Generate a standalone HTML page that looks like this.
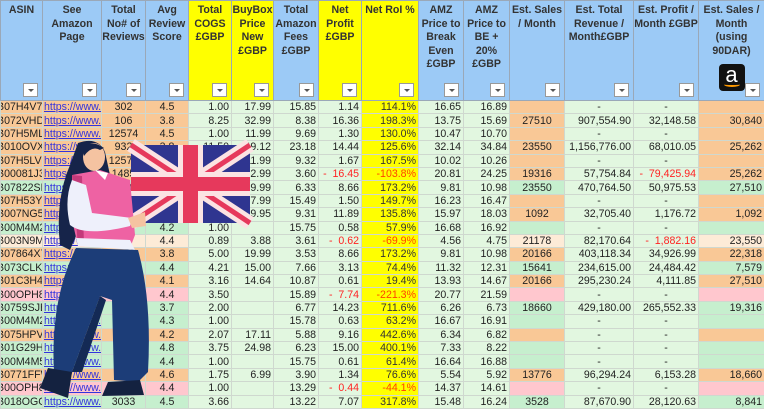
<!DOCTYPE html>
<html><head><meta charset="utf-8"><style>
body{margin:0;width:764px;height:400px;overflow:hidden;background:#fff;font-family:"Liberation Sans",sans-serif;position:relative}
table{border-collapse:collapse;table-layout:fixed;position:absolute;left:0;top:0;width:764px}
td{border:1px solid #cfd8cf;font-size:10.6px;color:#222;padding:0 2px;white-space:nowrap;overflow:hidden;height:12.4px;line-height:12px;text-align:right}
th{border:1px solid #9aa8b8;font-size:10.6px;font-weight:bold;color:#333;vertical-align:top;height:96px;padding:3px 0 0;line-height:13.5px;position:relative;background:#9ccaf6;overflow:hidden}
th.y{background:#ffff00}
th i{position:absolute;right:4px;bottom:3px;width:13px;height:12px;background:#fff;border:1px solid #999;font-style:normal}
th i:after{content:"";position:absolute;left:4px;top:5px;border:3px solid transparent;border-top:3px solid #555}
td.a{text-align:left;padding-left:0;text-indent:-4px}
td.l{text-align:left;color:#3333dd;text-decoration:underline;padding-left:1px}
td.c{text-align:center}
.o{background:#f9c896}.g{background:#c6efce}.p{background:#ffc7ce}.w{background:#fdebd7}
.lg{background:#e2f7e0}.yy{background:#ffff00;color:#333}
.r{color:#f22}
.rr{color:#f40}
</style></head><body>
<table>
<colgroup><col style="width:42px"><col style="width:59px"><col style="width:44px"><col style="width:43px"><col style="width:43px"><col style="width:42px"><col style="width:45px"><col style="width:43px"><col style="width:57px"><col style="width:45px"><col style="width:46px"><col style="width:55px"><col style="width:69px"><col style="width:65px"><col style="width:66px"></colgroup>
<tr><th>ASIN<i></i></th><th>See Amazon Page<i></i></th><th>Total No# of Reviews<i></i></th><th>Avg Review Score<i></i></th><th class="y">Total COGS £GBP<i></i></th><th class="y">BuyBox Price New £GBP<i></i></th><th>Total Amazon Fees £GBP<i></i></th><th class="y">Net Profit £GBP<i></i></th><th class="y">Net RoI %<i></i></th><th>AMZ Price to Break Even £GBP<i></i></th><th>AMZ Price to BE + 20% £GBP<i></i></th><th>Est. Sales / Month<i></i></th><th>Est. Total Revenue / Month£GBP<i></i></th><th>Est. Profit / Month £GBP<i></i></th><th>Est. Sales / Month (using 90DAR)<div style="margin:6px auto 0;width:26px;height:27px;background:#111;border-radius:4px;color:#fff;font-size:22px;line-height:22px;font-weight:normal">a<div style="width:16px;height:3px;border-bottom:2px solid #f90;border-radius:0 0 50% 50%;margin:-4px auto 0"></div></div><i></i></th></tr>
<tr class="o"><td class="a">B07H4V7M</td><td class="l">https://www.a</td><td class="c">302</td><td class="c">4.5</td><td class="lg">1.00</td><td class="lg">17.99</td><td class="lg">15.85</td><td class="lg">1.14</td><td class="yy">114.1%</td><td class="lg">16.65</td><td class="lg">16.89</td><td class="c"></td><td class="lg c">-</td><td class="lg c">-</td><td></td></tr>
<tr class="o"><td class="a">B072VHD</td><td class="l">https://www.a</td><td class="c">106</td><td class="c">3.8</td><td class="lg">8.25</td><td class="lg">32.99</td><td class="lg">8.38</td><td class="lg">16.36</td><td class="yy">198.3%</td><td class="lg">13.75</td><td class="lg">15.69</td><td class="c">27510</td><td class="lg">907,554.90</td><td class="lg">32,148.58</td><td>30,840</td></tr>
<tr class="o"><td class="a">B07H5ML</td><td class="l">https://www.a</td><td class="c">12574</td><td class="c">4.5</td><td class="lg">1.00</td><td class="lg">11.99</td><td class="lg">9.69</td><td class="lg">1.30</td><td class="yy">130.0%</td><td class="lg">10.47</td><td class="lg">10.70</td><td></td><td class="lg c">-</td><td class="lg c">-</td><td></td></tr>
<tr class="o"><td class="a">B010OVX</td><td class="l">https://www.a</td><td class="c">932</td><td class="c">3.8</td><td class="lg">11.50</td><td class="lg">49.12</td><td class="lg">23.18</td><td class="lg">14.44</td><td class="yy">125.6%</td><td class="lg">32.14</td><td class="lg">34.84</td><td class="c">23550</td><td class="lg">1,156,776.00</td><td class="lg">68,010.05</td><td>25,262</td></tr>
<tr class="o"><td class="a">B07H5LVS</td><td class="l">https://www.a</td><td class="c">12574</td><td class="c">4.5</td><td class="lg">8.99</td><td class="lg">11.99</td><td class="lg">9.32</td><td class="lg">1.67</td><td class="yy">167.5%</td><td class="lg">10.02</td><td class="lg">10.26</td><td></td><td class="lg c">-</td><td class="lg c">-</td><td></td></tr>
<tr class="o"><td class="a">B00081J3</td><td class="l">https://www.a</td><td class="c">1485</td><td class="c">4.4</td><td class="lg">2.99</td><td class="lg">22.99</td><td class="lg">3.60</td><td class="lg r">- &nbsp;16.45</td><td class="yy rr">-103.8%</td><td class="lg">20.81</td><td class="lg">24.25</td><td class="c">19316</td><td class="lg">57,754.84</td><td class="lg r">- &nbsp;79,425.94</td><td>25,262</td></tr>
<tr class="g"><td class="a">B07822SP</td><td class="l">https://www.a</td><td class="c">4450</td><td class="c">4.4</td><td class="lg">8.66</td><td class="lg">19.99</td><td class="lg">6.33</td><td class="lg">8.66</td><td class="yy">173.2%</td><td class="lg">9.81</td><td class="lg">10.98</td><td class="c">23550</td><td class="lg">470,764.50</td><td class="lg">50,975.53</td><td>27,510</td></tr>
<tr class="o"><td class="a">B07H53Y3</td><td class="l">https://www.a</td><td class="c">12574</td><td class="c">4.5</td><td class="lg">1.00</td><td class="lg">17.99</td><td class="lg">15.49</td><td class="lg">1.50</td><td class="yy">149.7%</td><td class="lg">16.23</td><td class="lg">16.47</td><td></td><td class="lg c">-</td><td class="lg c">-</td><td></td></tr>
<tr class="o"><td class="a">B007NG5I</td><td class="l">https://www.a</td><td class="c">1092</td><td class="c">4.5</td><td class="lg">8.75</td><td class="lg">29.95</td><td class="lg">9.31</td><td class="lg">11.89</td><td class="yy">135.8%</td><td class="lg">15.97</td><td class="lg">18.03</td><td class="c">1092</td><td class="lg">32,705.40</td><td class="lg">1,176.72</td><td>1,092</td></tr>
<tr class="g"><td class="a">B00M4M2</td><td class="l">https://www.a</td><td class="c">750</td><td class="c">4.2</td><td class="lg">1.00</td><td class="lg"></td><td class="lg">15.75</td><td class="lg">0.58</td><td class="yy">57.9%</td><td class="lg">16.68</td><td class="lg">16.92</td><td></td><td class="lg c">-</td><td class="lg c">-</td><td></td></tr>
<tr class="w"><td class="a">B003N9M</td><td class="l">https://www.a</td><td class="c">210</td><td class="c">4.4</td><td class="lg">0.89</td><td class="lg">3.88</td><td class="lg">3.61</td><td class="lg r">- &nbsp;0.62</td><td class="yy rr">-69.9%</td><td class="lg">4.56</td><td class="lg">4.75</td><td class="c">21178</td><td class="lg">82,170.64</td><td class="lg r">- &nbsp;1,882.16</td><td>23,550</td></tr>
<tr class="o"><td class="a">B07864X7</td><td class="l">https://www.a</td><td class="c">4450</td><td class="c">3.8</td><td class="lg">5.00</td><td class="lg">19.99</td><td class="lg">3.53</td><td class="lg">8.66</td><td class="yy">173.2%</td><td class="lg">9.81</td><td class="lg">10.98</td><td class="c">20166</td><td class="lg">403,118.34</td><td class="lg">34,926.99</td><td>22,318</td></tr>
<tr class="g"><td class="a">B073CLKN</td><td class="l">https://www.a</td><td class="c">1050</td><td class="c">4.4</td><td class="lg">4.21</td><td class="lg">15.00</td><td class="lg">7.66</td><td class="lg">3.13</td><td class="yy">74.4%</td><td class="lg">11.32</td><td class="lg">12.31</td><td class="c">15641</td><td class="lg">234,615.00</td><td class="lg">24,484.42</td><td>7,579</td></tr>
<tr class="o"><td class="a">B01C3H42</td><td class="l">https://www.a</td><td class="c">1440</td><td class="c">4.1</td><td class="lg">3.16</td><td class="lg">14.64</td><td class="lg">10.87</td><td class="lg">0.61</td><td class="yy">19.4%</td><td class="lg">13.93</td><td class="lg">14.67</td><td class="c">20166</td><td class="lg">295,230.24</td><td class="lg">4,111.85</td><td>27,510</td></tr>
<tr class="p"><td class="a">B00OPH8</td><td class="l">https://www.a</td><td class="c">1200</td><td class="c">4.4</td><td class="lg">3.50</td><td class="lg"></td><td class="lg">15.89</td><td class="lg r">- &nbsp;7.74</td><td class="yy rr">-221.3%</td><td class="lg">20.77</td><td class="lg">21.59</td><td></td><td class="lg c">-</td><td class="lg c">-</td><td></td></tr>
<tr class="g"><td class="a">B0759SJB</td><td class="l">https://www.a</td><td class="c">720</td><td class="c">3.7</td><td class="lg">2.00</td><td class="lg"></td><td class="lg">6.77</td><td class="lg">14.23</td><td class="yy">711.6%</td><td class="lg">6.26</td><td class="lg">6.73</td><td class="c">18660</td><td class="lg">429,180.00</td><td class="lg">265,552.33</td><td>19,316</td></tr>
<tr class="g"><td class="a">B00M4M2</td><td class="l">https://www.a</td><td class="c">750</td><td class="c">4.3</td><td class="lg">1.00</td><td class="lg"></td><td class="lg">15.78</td><td class="lg">0.63</td><td class="yy">63.2%</td><td class="lg">16.67</td><td class="lg">16.91</td><td></td><td class="lg c">-</td><td class="lg c">-</td><td></td></tr>
<tr class="o"><td class="a">B075HPVI</td><td class="l">https://www.a</td><td class="c">310</td><td class="c">4.2</td><td class="lg">2.07</td><td class="lg">17.11</td><td class="lg">5.88</td><td class="lg">9.16</td><td class="yy">442.6%</td><td class="lg">6.34</td><td class="lg">6.82</td><td></td><td class="lg c">-</td><td class="lg c">-</td><td></td></tr>
<tr class="g"><td class="a">B01G29H</td><td class="l">https://www.a</td><td class="c">530</td><td class="c">4.8</td><td class="lg">3.75</td><td class="lg">24.98</td><td class="lg">6.23</td><td class="lg">15.00</td><td class="yy">400.1%</td><td class="lg">7.33</td><td class="lg">8.22</td><td></td><td class="lg c">-</td><td class="lg c">-</td><td></td></tr>
<tr class="g"><td class="a">B00M4M5</td><td class="l">https://www.a</td><td class="c">750</td><td class="c">4.4</td><td class="lg">1.00</td><td class="lg"></td><td class="lg">15.75</td><td class="lg">0.61</td><td class="yy">61.4%</td><td class="lg">16.64</td><td class="lg">16.88</td><td></td><td class="lg c">-</td><td class="lg c">-</td><td></td></tr>
<tr class="o"><td class="a">B0771FFW</td><td class="l">https://www.a</td><td class="c">106</td><td class="c">4.6</td><td class="lg">1.75</td><td class="lg">6.99</td><td class="lg">3.90</td><td class="lg">1.34</td><td class="yy">76.6%</td><td class="lg">5.54</td><td class="lg">5.92</td><td class="c">13776</td><td class="lg">96,294.24</td><td class="lg">6,153.28</td><td>18,660</td></tr>
<tr class="p"><td class="a">B00OPH8I</td><td class="l">https://www.a</td><td class="c">1201</td><td class="c">4.4</td><td class="lg">1.00</td><td class="lg"></td><td class="lg">13.29</td><td class="lg r">- &nbsp;0.44</td><td class="yy rr">-44.1%</td><td class="lg">14.37</td><td class="lg">14.61</td><td></td><td class="lg c">-</td><td class="lg c">-</td><td></td></tr>
<tr class="g"><td class="a">B018OGG</td><td class="l">https://www.a</td><td class="c">3033</td><td class="c">4.5</td><td class="lg">3.66</td><td class="lg"></td><td class="lg">13.22</td><td class="lg">7.07</td><td class="yy">317.8%</td><td class="lg">15.48</td><td class="lg">16.24</td><td class="c">3528</td><td class="lg">87,670.90</td><td class="lg">28,120.63</td><td>8,841</td></tr>
</table>
<svg width="764" height="400" style="position:absolute;left:0;top:0">
<g transform="translate(131,145)">
<rect width="119" height="78" fill="#2f3590"/>
<path d="M0 0L119 78M119 0L0 78" stroke="#fbe3e3" stroke-width="14"/>
<path d="M0 0L59 39M119 0L60 39M0 78L59 39M119 78L60 39" stroke="#e6395c" stroke-width="5"/>
<rect x="47" width="25" height="78" fill="#fbe3e3"/>
<rect y="27" width="119" height="24" fill="#fbe3e3"/>
<rect x="52" width="15" height="78" fill="#e6395c"/>
<rect y="32" width="119" height="14" fill="#e6395c"/>
</g>
<path d="M78 143 Q98 136 105 152 L110 175 L100 180 L70 250 L60 245 Q55 200 70 165 Z" fill="#16244a"/>
<ellipse cx="94" cy="157" rx="11" ry="14" fill="#f5c3a1"/>
<path d="M82 150 Q90 138 104 148 L100 150 Q92 145 84 156Z" fill="#16244a"/>
<path d="M72 175 L100 170 L130 180 L135 235 L130 248 L78 246 L72 220 Z" fill="#ee62a3"/>
<path d="M72 175 L82 176 L84 245 L78 246 Z" fill="#c33a7a"/>
<path d="M95 170 L105 180 L108 173Z" fill="#fff"/>
<path d="M72 180 Q64 200 70 225 Q85 237 130 226 L132 218 L92 213 L86 185Z" fill="#eef0fb"/>
<path d="M78 246 L135 250 L130 240 L76 238Z" fill="#eef0fb"/>
<path d="M128 218 L145 212 L146 226 L132 228Z" fill="#f5c3a1"/>
<path d="M76 248 L138 250 Q152 300 148 372 L138 382 L114 380 L112 300 L100 296 L72 372 L54 372 Q50 300 76 248Z" fill="#1c3d78"/>
<path d="M100 296 L72 372 L82 372 L106 300Z" fill="#142a55"/>
<path d="M48 368 L72 372 L68 398 L40 388Z" fill="#142240"/>
<path d="M108 382 L140 380 L144 395 L102 396Z" fill="#142240"/>
</svg>
</body></html>
